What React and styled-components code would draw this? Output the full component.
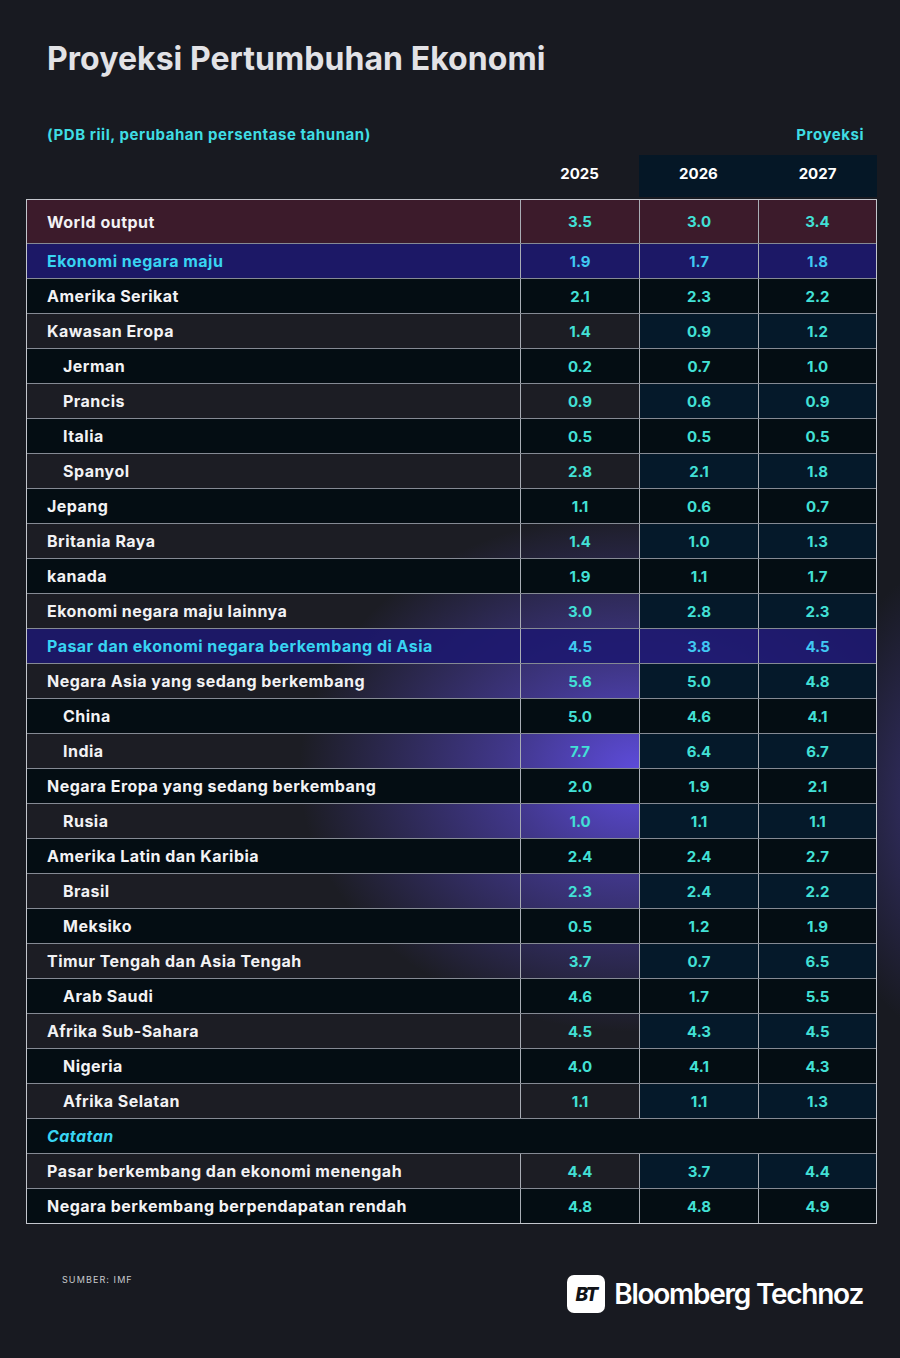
import React from "react";
import styled, { createGlobalStyle, css } from "styled-components";

const GlobalStyle = createGlobalStyle`
  html, body {
    margin: 0;
    padding: 0;
    background: #181a21;
  }
  * {
    box-sizing: border-box;
  }
`;

const Page = styled.div`
  width: 900px;
  height: 1358px;
  padding: 40px 0 0 26px;
  font-family: Inter, "Noto Sans", sans-serif;
  background:
    radial-gradient(ellipse 110px 230px at 935px 800px, rgba(78, 66, 170, 0.55), rgba(78, 66, 170, 0) 100%),
    #181a21;
  overflow: hidden;
`;

const Title = styled.h1`
  margin: 0 0 0 21px;
  font-size: 32px;
  line-height: 38px;
  font-weight: 700;
  letter-spacing: 0.05px;
  color: #e2e2e6;
`;

const SubRow = styled.div`
  width: 851px;
  display: flex;
  justify-content: space-between;
  margin-top: 47px;
  padding: 0 13px 0 21px;
  font-size: 15px;
  line-height: 20px;
  font-weight: 700;
  letter-spacing: 0.55px;
  color: #3fdde4;
`;

const Cols = css`
  display: grid;
  grid-template-columns: 494px 119px 119px 119px;
`;

const YearRow = styled.div`
  ${Cols};
  width: 851px;
  height: 44px;
  margin-top: 10px;
`;

const Year = styled.div`
  display: flex;
  align-items: center;
  justify-content: center;
  padding-bottom: 5px;
  font-size: 15px;
  font-weight: 700;
  color: #ffffff;
  background: ${(p) => (p.$proj ? "#051726" : "transparent")};
  border-bottom: 2px solid #181a21;
`;

const Table = styled.div`
  width: 851px;
  border: 1px solid #c3c6cd;
  background:
    radial-gradient(ellipse 340px 260px at 612px 572px, #5e4cdc 0%, rgba(94, 76, 220, 0.55) 40%, rgba(94, 76, 220, 0) 100%),
    #1c1d24;
`;

const rowBg = {
  world: "#3c1b2b",
  group: "rgba(29, 24, 112, 0.88)",
  dark: "#040d13",
  light: "transparent",
};

const Row = styled.div`
  display: grid;
  grid-template-columns: ${(p) => (p.$span ? "1fr" : "493px 119px 119px 118px")};
  height: ${(p) => (p.$tall ? "44px" : "35px")};
  border-bottom: 1px solid #858a94;
  background: ${(p) => rowBg[p.$kind]};

  &:last-child {
    border-bottom: none;
    height: ${(p) => (p.$tall ? "43px" : "34px")};
  }
`;

const Label = styled.div`
  display: flex;
  align-items: center;
  padding-left: ${(p) => (p.$indent ? "36px" : "20px")};
  font-size: 16px;
  font-weight: 700;
  letter-spacing: 0.47px;
  color: ${(p) => (p.$accent ? "#38d4f2" : "#f2f2f4")};
  font-style: ${(p) => (p.$italic ? "italic" : "normal")};
`;

const Value = styled.div`
  display: flex;
  align-items: center;
  justify-content: center;
  border-left: 1px solid #a9adb5;
  font-size: 15px;
  font-weight: 700;
  color: ${(p) => (p.$accent ? "#40c8f2" : "#42e0d6")};
  background: ${(p) => (p.$navy ? "#05192a" : "transparent")};
`;

const Footer = styled.div`
  width: 837px;
  display: flex;
  justify-content: space-between;
  align-items: flex-start;
  margin-top: 51px;
  padding-left: 36px;
`;

const Source = styled.div`
  margin-top: -1px;
  font-size: 9px;
  letter-spacing: 1.1px;
  color: #c9cace;
`;

const Brand = styled.div`
  display: flex;
  align-items: center;
  gap: 9px;
`;

const BrandMark = styled.div`
  width: 38px;
  height: 38px;
  border-radius: 7px;
  background: #ffffff;
  display: flex;
  align-items: center;
  justify-content: center;
  font-size: 19px;
  font-weight: 800;
  font-style: italic;
  letter-spacing: -1.5px;
  color: #111318;
`;

const BrandName = styled.div`
  font-size: 28px;
  font-weight: 600;
  letter-spacing: -1.25px;
  color: #ffffff;
  line-height: 38px;
`;

const rows = [
  { label: "World output", v: ["3.5", "3.0", "3.4"], kind: "world" },
  { label: "Ekonomi negara maju", v: ["1.9", "1.7", "1.8"], kind: "group" },
  { label: "Amerika Serikat", v: ["2.1", "2.3", "2.2"] },
  { label: "Kawasan Eropa", v: ["1.4", "0.9", "1.2"] },
  { label: "Jerman", v: ["0.2", "0.7", "1.0"], indent: true },
  { label: "Prancis", v: ["0.9", "0.6", "0.9"], indent: true },
  { label: "Italia", v: ["0.5", "0.5", "0.5"], indent: true },
  { label: "Spanyol", v: ["2.8", "2.1", "1.8"], indent: true },
  { label: "Jepang", v: ["1.1", "0.6", "0.7"] },
  { label: "Britania Raya", v: ["1.4", "1.0", "1.3"] },
  { label: "kanada", v: ["1.9", "1.1", "1.7"] },
  { label: "Ekonomi negara maju lainnya", v: ["3.0", "2.8", "2.3"] },
  { label: "Pasar dan ekonomi negara berkembang di Asia", v: ["4.5", "3.8", "4.5"], kind: "group" },
  { label: "Negara Asia yang sedang berkembang", v: ["5.6", "5.0", "4.8"] },
  { label: "China", v: ["5.0", "4.6", "4.1"], indent: true },
  { label: "India", v: ["7.7", "6.4", "6.7"], indent: true },
  { label: "Negara Eropa yang sedang berkembang", v: ["2.0", "1.9", "2.1"] },
  { label: "Rusia", v: ["1.0", "1.1", "1.1"], indent: true },
  { label: "Amerika Latin dan Karibia", v: ["2.4", "2.4", "2.7"] },
  { label: "Brasil", v: ["2.3", "2.4", "2.2"], indent: true },
  { label: "Meksiko", v: ["0.5", "1.2", "1.9"], indent: true },
  { label: "Timur Tengah dan Asia Tengah", v: ["3.7", "0.7", "6.5"] },
  { label: "Arab Saudi", v: ["4.6", "1.7", "5.5"], indent: true },
  { label: "Afrika Sub-Sahara", v: ["4.5", "4.3", "4.5"] },
  { label: "Nigeria", v: ["4.0", "4.1", "4.3"], indent: true },
  { label: "Afrika Selatan", v: ["1.1", "1.1", "1.3"], indent: true },
  { label: "Catatan", kind: "note" },
  { label: "Pasar berkembang dan ekonomi menengah", v: ["4.4", "3.7", "4.4"] },
  { label: "Negara berkembang berpendapatan rendah", v: ["4.8", "4.8", "4.9"] },
];

function App() {
  return (
    <Page>
      <GlobalStyle />
      <Title>Proyeksi Pertumbuhan Ekonomi</Title>
      <SubRow>
        <span>(PDB riil, perubahan persentase tahunan)</span>
        <span>Proyeksi</span>
      </SubRow>
      <YearRow>
        <div />
        <Year>2025</Year>
        <Year $proj>2026</Year>
        <Year $proj>2027</Year>
      </YearRow>
      <Table>
        {rows.map((r, i) => {
          if (r.kind === "note") {
            return (
              <Row key={i} $span $kind="dark">
                <Label $accent $italic>
                  {r.label}
                </Label>
              </Row>
            );
          }
          const kind = r.kind || (i % 2 === 1 ? "light" : "dark");
          const accent = r.kind === "group";
          return (
            <Row key={i} $kind={kind} $tall={r.kind === "world"}>
              <Label $indent={r.indent} $accent={accent}>
                {r.label}
              </Label>
              {r.v.map((val, j) => (
                <Value key={j} $accent={accent} $navy={kind === "light" && j > 0}>
                  {val}
                </Value>
              ))}
            </Row>
          );
        })}
      </Table>
      <Footer>
        <Source>SUMBER: IMF</Source>
        <Brand>
          <BrandMark>BT</BrandMark>
          <BrandName>Bloomberg Technoz</BrandName>
        </Brand>
      </Footer>
    </Page>
  );
}

export default App;
